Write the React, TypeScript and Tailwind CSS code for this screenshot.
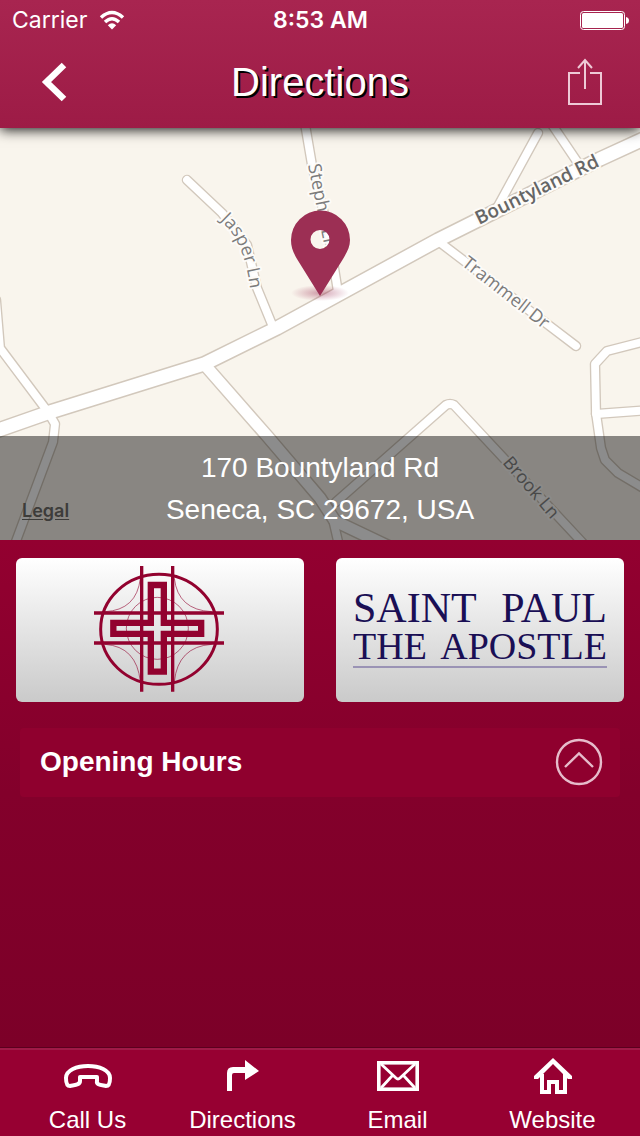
import { useState } from "react";

const mainRoad = "M-10 433 L50 412 L204 364 L277 328 L438 240 L500 209 L600 159 L650 136";
const southRoad = "M204 364 L268 437 L320 498 L335 521 L377 541 L400 552";
const sideRoads = [
  "M187 180 L222 213 L247 245 L257 288 L273 327",
  "M304 118 L312 165 L328 230 L338 292",
  "M538 133 L497 208",
  "M549 120 L578 163",
  "M438 241 L576 346",
  "M650 340 L607 351 L595 364 L596 413 L601 448 L605 460 L618 473 L650 492",
  "M596 414 L650 410",
  "M336 502 L446 405 Q450 403 454 405 L580 540 L590 551",
  "M332 515 L340 550",
  "M-4 300 L0 348 L48 412 L55 424 L53 442 L12 552",
];

function StreetMap() {
  return (
    <svg
      className="block h-full w-full"
      viewBox="0 128 640 412"
      preserveAspectRatio="xMidYMid slice"
      role="img"
      aria-label="Map of Bountyland Rd"
    >
      <defs>
        <path id="jasper" d="M220 220 C237 236 247 254 252 304" />
        <path id="steph" d="M308 165 L329 269" />
        <radialGradient id="pinShadow">
          <stop offset="0" stopColor="#9c2f54" stopOpacity="0.45" />
          <stop offset="1" stopColor="#9c2f54" stopOpacity="0" />
        </radialGradient>
      </defs>
      <rect y="128" width="640" height="412" fill="#f9f5ed" />
      <g fill="none" strokeLinecap="round" strokeLinejoin="round">
        <g stroke="#d2c8bc">
          {sideRoads.map((d) => (
            <path key={d} d={d} strokeWidth="10.5" />
          ))}
          <path d={southRoad} strokeWidth="14" />
          <path d={mainRoad} strokeWidth="16" />
        </g>
        <g stroke="#fff">
          {sideRoads.map((d) => (
            <path key={d} d={d} strokeWidth="7.8" />
          ))}
          <path d={southRoad} strokeWidth="11" />
          <path d={mainRoad} strokeWidth="13" />
        </g>
      </g>
      <g
        className="font-['Open_Sans',sans-serif] text-[18px]"
        fill="#7c7c7c"
        stroke="#fdfbf8"
        strokeWidth="4"
        strokeLinejoin="round"
        paintOrder="stroke"
      >
        <text>
          <textPath href="#jasper">Jasper Ln</textPath>
        </text>
        <text>
          <textPath href="#steph">Steph</textPath>
        </text>
        <text>
          <textPath href="#steph" startOffset="66">Ln</textPath>
        </text>
        <text transform="translate(461 265) rotate(38)">Trammell Dr</text>
        <text transform="translate(502 463) rotate(49)" fill="#858585">Brook Ln</text>
        <text transform="translate(479 225) rotate(-26)" fill="#666" className="text-[19px] font-semibold">
          Bountyland Rd
        </text>
      </g>
      <ellipse cx="320" cy="293" rx="29" ry="8" fill="url(#pinShadow)" />
      <path
        fill="#9c2f54"
        fillRule="evenodd"
        d="M320 296 L297 259 C293 252 291 247 291 240 A29.5 29.5 0 0 1 350 240 C350 247 347 252 343 259 Z M320 230 a9.5 9.5 0 1 0 0 19 a9.5 9.5 0 1 0 0 -19 Z"
      />
    </svg>
  );
}

function StatusBar() {
  return (
    <div className="grid h-10 grid-cols-3 items-center pr-[11px] pl-3 font-[Inter,sans-serif] text-[23px]">
      <div className="flex items-center gap-3">
        <span>Carrier</span>
        <svg width="26" height="20" viewBox="0 0 26 20" fill="none" stroke="#fff" strokeWidth="3.5" aria-label="Wi-Fi">
          <path d="M2 7.5 Q13 -2.5 24 7.5" />
          <path d="M6 12 Q13 5.5 20 12" />
          <path d="M13 19.5 L8.8 15.2 Q13 11.5 17.2 15.2 Z" fill="#fff" stroke="none" />
        </svg>
      </div>
      <time className="text-center font-semibold whitespace-nowrap">8:53 AM</time>
      <svg className="justify-self-end" width="49" height="19" viewBox="0 0 49 19" aria-label="Battery full">
        <rect x="0.5" y="0.5" width="44" height="18" rx="3" fill="none" stroke="#fff" />
        <rect x="2" y="2" width="41" height="15" rx="1.5" fill="#fff" />
        <path d="M46 6 Q49 6.500 49 9.500 Q49 12.500 46 13 Z" fill="#fff" />
      </svg>
    </div>
  );
}

function CrossLogo() {
  return (
    <svg className="h-[140px] w-[140px]" viewBox="30 15 420 420" fill="none" stroke="#92022f" role="img" aria-label="Parish cross">
      <ellipse cx="237" cy="223" rx="175" ry="165" strokeWidth="9" />
      <g strokeWidth="1.800">
        <circle cx="232" cy="220" r="93" />
        <path d="M181 70 Q170 165 75 170 M283 70 Q294 165 395 170 M181 380 Q170 275 75 268 M283 380 Q294 275 395 268" />
      </g>
      <path
        strokeWidth="19"
        d="M212.500 203.500 V90 H251.500 V203.500 H363.500 V236.500 H251.500 V350 H212.500 V236.500 H100 V203.500 Z"
      />
      <path strokeWidth="10" d="M185 33 V410 M278 33 V410 M42 174 H432 M42 264 H432" />
    </svg>
  );
}

const tabs = [
  {
    label: "Call Us",
    icon: (
      <svg width="52" height="36" viewBox="0 0 52 36" fill="none" stroke="#fff" strokeWidth="4" strokeLinejoin="round">
        <path d="M4 20 C4 4 48 4 48 20 C48 26 47 28 44 28 C39 27 34 27 35 23 V19 H18 V23 C18 27 13 27 8 28 C5 28 4 25 4 20 Z" />
      </svg>
    ),
  },
  {
    label: "Directions",
    icon: (
      <svg width="34" height="36" viewBox="0 0 34 36" fill="#fff">
        <path d="M1 33 V15 Q1 9 7 9 H19 V2 L33 13 L19 22 V15 H8 Q6 15 6 17 V33 Z" />
      </svg>
    ),
  },
  {
    label: "Email",
    icon: (
      <svg width="42" height="36" viewBox="0 0 42 36" fill="none" stroke="#fff">
        <rect x="1.800" y="4.800" width="38.400" height="26.400" strokeWidth="3.600" />
        <path d="M4 6 L19 20 Q21 22 23 20 L38 6 M4 30 L15 18 M38 30 L27 18" strokeWidth="2.800" />
      </svg>
    ),
  },
  {
    label: "Website",
    icon: (
      <svg width="38" height="36" viewBox="0 0 38 36" fill="none" stroke="#fff" strokeWidth="3">
        <path d="M0 18 L19 0 L38 18 V21 H34 L19 6 L4 21 H0 Z" fill="#fff" stroke="none" />
        <path d="M8 16 V34 H15 V24 H23 V34 H31 V16" strokeWidth="4" />
      </svg>
    ),
  },
];

export default function App() {
  const [open, setOpen] = useState(false);
  return (
    <div className="flex min-h-screen flex-col bg-[#7c0028] font-['Liberation_Sans',Arial,sans-serif] text-white">
      <header className="relative z-10 bg-linear-to-b from-[#a82550] to-[#9d1b46] shadow-[0_2px_12px_rgba(0,0,0,0.9)]">
        <StatusBar />
        <div className="grid h-[88px] grid-cols-[1fr_auto_1fr] items-center px-9 pb-1">
          <button type="button" aria-label="Back" className="justify-self-start p-1">
            <svg width="28" height="40" viewBox="0 0 28 40" fill="none" stroke="#fff" strokeWidth="6.500">
              <path d="M24 3 L6.500 20 L24 37" />
            </svg>
          </button>
          <h1 className="text-[40px] leading-none [text-shadow:2px_2px_0_#000]">Directions</h1>
          <button type="button" aria-label="Share" className="justify-self-end">
            <svg width="38" height="48" viewBox="0 0 38 48" fill="none" stroke="#eec9d6" strokeWidth="2">
              <path d="M14 15 H3 V46 H35 V15 H24 M19 31 V2 M12 10 L19 2 L26 10" />
            </svg>
          </button>
        </div>
      </header>

      <section className="relative h-[412px]">
        <StreetMap />
        <div className="absolute inset-x-0 bottom-0 bg-black/45 pt-[11px] pb-[9px] text-center">
          <a href="#legal" className="absolute bottom-4 left-[22px] font-[Inter,sans-serif] text-[18px] font-semibold text-[#3d3c3a] underline underline-offset-2">
            Legal
          </a>
          <address className="text-[28px] leading-[42px] not-italic">
            170 Bountyland Rd
            <br />
            Seneca, SC 29672, USA
          </address>
        </div>
      </section>

      <main className="flex-1 bg-linear-to-b from-[#930030] via-[#83002b] via-50% to-[#7c0028]">
        <div className="grid grid-cols-2 gap-8 px-4 pt-[18px]">
          <div className="flex h-36 items-center justify-center rounded-md bg-linear-to-b from-white to-[#cacaca]">
            <CrossLogo />
          </div>
          <div className="flex h-36 items-center rounded-md bg-linear-to-b from-white to-[#cacaca] px-[17px] pb-[3px]">
            <div className="w-full border-b-2 border-[#9a93b5] pb-px font-['Liberation_Serif',serif] leading-[38px] text-[#1a0f55]">
              <div className="flex justify-between text-[42px]">
                <span>SAINT</span>
                <span>PAUL</span>
              </div>
              <div className="flex justify-between text-[38px]">
                <span>THE</span>
                <span>APOSTLE</span>
              </div>
            </div>
          </div>
        </div>
        <button
          type="button"
          aria-expanded={open}
          onClick={() => setOpen(!open)}
          className="mx-5 mt-[26px] flex h-[69px] w-[calc(100%-40px)] items-center justify-between rounded bg-[#8f002e] pr-[17px] pb-[2px] pl-5 text-[28px] font-bold"
        >
          <span>Opening Hours</span>
          <svg width="48" height="48" viewBox="0 0 48 48" fill="none" stroke="#e6bccb" strokeWidth="2.400">
            <circle cx="24" cy="24" r="22" />
            <path d="M10 29 L24 15.500 L38 29" />
          </svg>
        </button>
      </main>

      <nav className="grid h-[89px] grid-cols-4 border-t border-[#5c001e] bg-[#970032] px-[10px] pt-[10px] shadow-[inset_0_2px_0_#a01a47]">
        {tabs.map(({ label, icon }) => (
          <a key={label} href={`#${label}`} className="flex flex-col items-center gap-3 text-[24px] leading-7">
            {icon}
            <span>{label}</span>
          </a>
        ))}
      </nav>
    </div>
  );
}
